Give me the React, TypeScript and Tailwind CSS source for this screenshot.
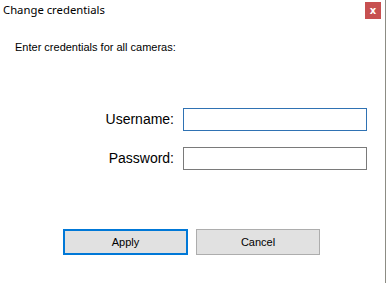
import React from "react";

export default function App() {
  return (
    <div className="w-[386px] h-[283px] bg-white flex overflow-hidden">
      <div className="flex-1 flex flex-col">
        {/* title bar */}
        <div className="h-[21px] flex items-start justify-between">
          <div
            className="pl-[3px] pt-[2px] text-[11.3px] leading-[16px] text-black"
            style={{ fontFamily: '"Noto Sans", "Open Sans", sans-serif' }}
          >
            Change credentials
          </div>
          <div className="mt-[2px] mr-[4px] w-[16px] h-[17px] bg-[#c75050] flex items-center justify-center text-white text-[10px] font-bold leading-none"
            style={{ fontFamily: '"DejaVu Sans", sans-serif' }}>
            x
          </div>
        </div>
        <div
          className="flex flex-col text-black"
          style={{ fontFamily: '"Liberation Sans", Arial, sans-serif' }}
        >
          <div className="pl-[15px] mt-[20px] text-[11px] leading-[13px]">
            Enter credentials for all cameras:
          </div>
          <div className="mt-[54px] flex items-center">
            <div className="w-[175px] text-right pr-[1px] text-[14px] leading-[15px]">Username:</div>
            <div className="ml-[8px] w-[184px] h-[23px] border border-[#2f72b3] bg-white" />
          </div>
          <div className="mt-[16px] flex items-center">
            <div className="w-[175px] text-right pr-[1px] text-[14px] leading-[15px]">Password:</div>
            <div className="ml-[8px] w-[184px] h-[23px] border border-[#7a7a7a] bg-white" />
          </div>
          <div className="mt-[59px] pl-[63px] flex gap-[8px]">
            <div className="w-[125px] h-[26px] border-2 border-[#0078d7] bg-[#e1e1e1] flex items-center justify-center text-[11px]">
              Apply
            </div>
            <div className="w-[124px] h-[26px] border border-[#adadad] bg-[#e1e1e1] flex items-center justify-center text-[11px]">
              Cancel
            </div>
          </div>
        </div>
      </div>
      <div className="w-[1px] h-full bg-[#8c8c84]" />
    </div>
  );
}
